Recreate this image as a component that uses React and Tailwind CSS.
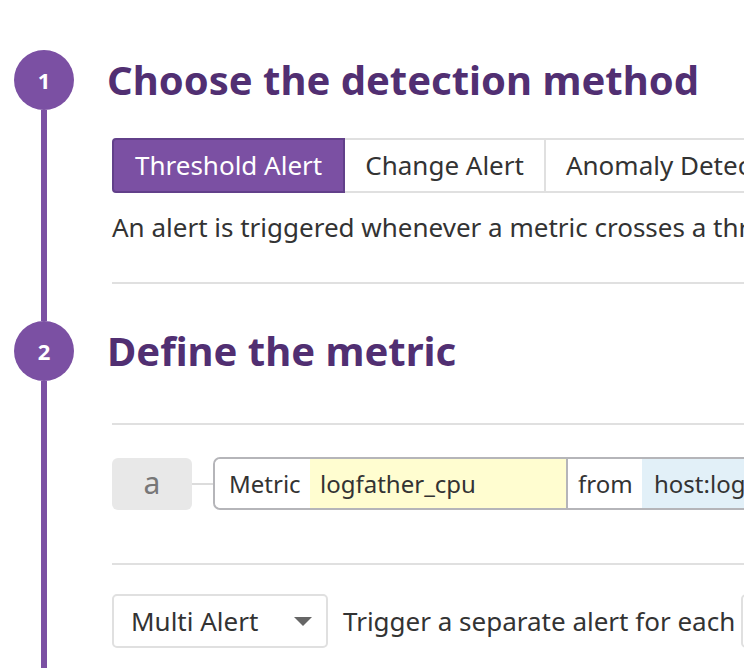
import React from "react";

const StepRail = ({ n }) => (
  <div className="w-[88px] shrink-0 flex flex-col items-center">
    <div className="w-[60px] h-[60px] rounded-full bg-[#7b50a3] flex items-center justify-center text-white text-[22px] font-bold">
      {n}
    </div>
    <div className="w-[6px] flex-1 bg-[#7b50a3]" />
  </div>
);

const Divider = ({ className = "" }) => (
  <div className={`h-[2px] bg-[#e0e0e0] ${className}`} />
);

export default function App() {
  const tabs = ["Threshold Alert", "Change Alert", "Anomaly Detection", "Outlier Alert"];

  return (
    <div className="w-[744px] h-[668px] overflow-hidden bg-white font-['Noto_Sans',sans-serif] text-[#333]">
      {/* step 1 */}
      <div className="flex pt-[50px]">
        <StepRail n={1} />
        <div className="w-[1100px] shrink-0 pl-[19px] pb-[37px]">
          <div className="h-[60px] flex items-center">
            <h1 className="text-[40px] font-bold text-[#512f72] leading-none">
              Choose the detection method
            </h1>
          </div>
          <div className="ml-[5px] mt-[28px] flex h-[55px] text-[26px]">
            {tabs.map((t, i) => (
              <div
                key={t}
                className={
                  i === 0
                    ? "px-[21px] flex items-center bg-[#7b50a3] border-2 border-[#62408a] rounded-l-[4px] text-white"
                    : "px-[20px] flex items-center border-y-2 border-r-2 border-[#e0e0e0] text-[#333]"
                }
              >
                {t}
              </div>
            ))}
          </div>
          <p className="ml-[5px] mt-[17px] text-[26px] leading-[34px] whitespace-nowrap">
            An alert is triggered whenever a metric crosses a threshold.
          </p>
          <Divider className="ml-[5px] mt-[38px]" />
        </div>
      </div>

      {/* step 2 */}
      <div className="flex h-[400px]">
        <StepRail n={2} />
        <div className="w-[1100px] shrink-0 pl-[19px]">
          <div className="h-[60px] flex items-center">
            <h1 className="text-[40px] font-bold text-[#512f72] leading-none">
              Define the metric
            </h1>
          </div>
          <Divider className="ml-[5px] mt-[42px]" />

          <div className="ml-[5px] mt-[32px] flex items-center">
            <div className="w-[80px] h-[52px] rounded-[6px] bg-[#e8e8e8] flex items-center justify-center text-[30px] text-[#777] pb-[3px]">
              a
            </div>
            <div className="w-[21px] h-[2px] bg-[#dcdcdc]" />
            <div className="flex h-[53px] border-2 border-[#b5b5b9] rounded-l-[7px] text-[24px] text-[#333]">
              <div className="w-[95px] flex items-center pl-[14px] bg-white rounded-l-[6px]">
                Metric
              </div>
              <div className="w-[258px] flex items-center pl-[10px] bg-[#fffdd0] border-r-2 border-[#b5b5b9]">
                logfather_cpu
              </div>
              <div className="w-[74px] flex items-center pl-[10px] bg-white">
                from
              </div>
              <div className="w-[300px] flex items-center pl-[12px] bg-[#e2f0f8]">
                host:logfather
              </div>
            </div>
          </div>

          <Divider className="ml-[5px] mt-[53px]" />

          <div className="ml-[5px] mt-[29px] flex items-center">
            <div className="w-[216px] h-[54px] border-2 border-[#e0e0e0] rounded-[5px] flex items-center justify-between pl-[17px] pr-[14px] text-[26px] text-[#333]">
              <span>Multi Alert</span>
              <svg width="18" height="9" viewBox="0 0 18 9">
                <path d="M0 0 H18 L9 9 Z" fill="#666" />
              </svg>
            </div>
            <span className="ml-[15px] text-[26px] text-[#333] whitespace-nowrap">
              Trigger a separate alert for each
            </span>
            <div className="ml-[6px] w-[160px] h-[54px] border-2 border-[#e0e0e0] rounded-[5px]" />
          </div>
        </div>
      </div>
    </div>
  );
}
